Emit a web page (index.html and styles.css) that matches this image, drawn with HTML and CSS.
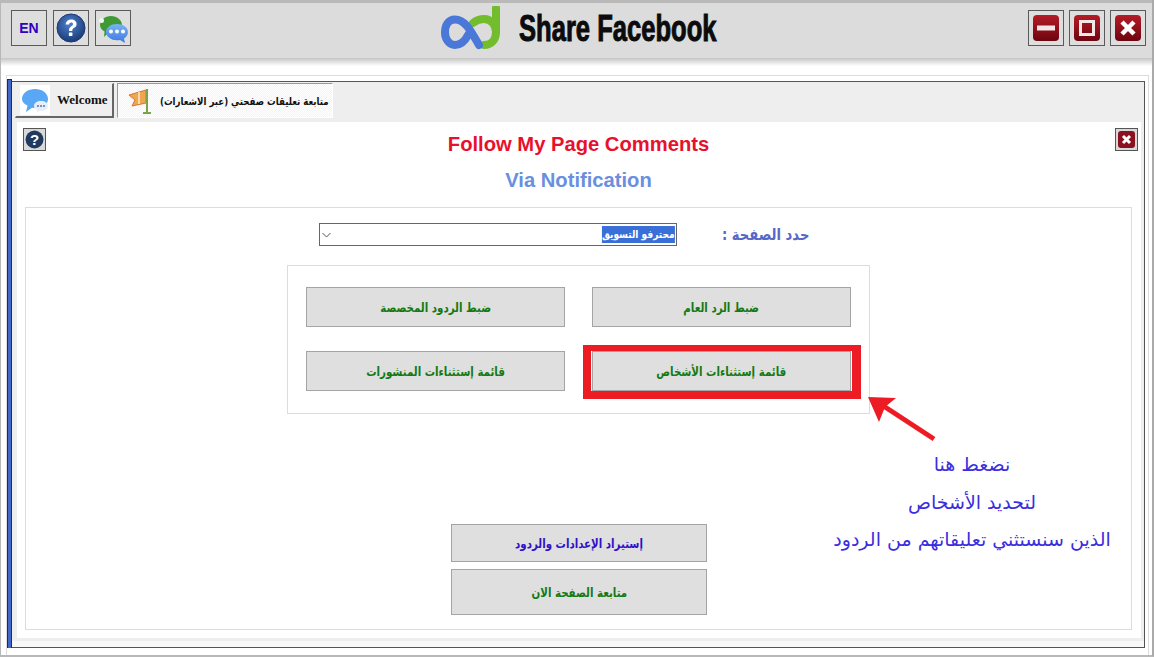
FILE: index.html
```html
<!DOCTYPE html>
<html lang="ar">
<head>
<meta charset="utf-8">
<title>Share Facebook</title>
<link rel="stylesheet" href="styles.css">
</head>
<body>
<div class="window">
  <header class="topbar">
    <div class="tool-group">
      <button class="tool lang">EN</button>
      <button class="tool"><svg width="30" height="30" viewBox="0 0 30 30"><defs><radialGradient id="gb" cx="45%" cy="35%" r="70%"><stop offset="0" stop-color="#4f80cc"/><stop offset="1" stop-color="#163672"/></radialGradient></defs><circle cx="15" cy="15" r="14" fill="url(#gb)" stroke="#1d3670"/><path d="M9.600 11.600c.3-3.400 2.700-5.200 5.700-5.200 3.100 0 5.300 1.800 5.300 4.500 0 2-1.100 3.100-2.700 4.200-1.300.9-1.600 1.400-1.600 2.900h-3.300c-.1-2.400.5-3.500 2.200-4.700 1.200-.9 1.800-1.400 1.800-2.300 0-1-.7-1.600-1.800-1.600-1.200 0-2 .8-2.200 2.200z" fill="#fff"/><rect x="12.900" y="19.600" width="3.500" height="3.500" rx=".6" fill="#fff"/></svg></button>
      <button class="tool"><svg width="32" height="32" viewBox="0 0 32 32"><defs><linearGradient id="cb" x1="0" y1="0" x2="0" y2="1"><stop offset="0" stop-color="#78b4f5"/><stop offset="1" stop-color="#3c78e0"/></linearGradient></defs><path d="M3 13C3 8 8 4 14 4s11 4 11 9-5 9-11 9c-1.200 0-2.300-.1-3.300-.4L7 25l.5-5.500C4.800 18 3 15.700 3 13z" fill="#3f9a36"/><circle cx="4.500" cy="8.500" r="2.500" fill="#eef6ea"/><path d="M9 20c0-4.500 5-8 11-8s11 3.500 11 8c0 2.800-1.500 5-4 6.500l1 4.500-5-3c-1 .2-2 .3-3 .3-6 0-11-3.800-11-8.300z" fill="url(#cb)"/><circle cx="14" cy="19.500" r="2" fill="#fff"/><circle cx="20" cy="19.500" r="2" fill="#fff"/><circle cx="26" cy="19.500" r="2" fill="#fff"/></svg></button>
    </div>
    <div class="brand">
      <svg class="brand-mark" width="68" height="46" viewBox="440 6 68 46"><path d="M473 23C476 20.500 480 19 484 19 491 19 496 25 496 32 496 40 491 45 484 45M496 33V8" fill="none" stroke="#73bc2e" stroke-width="8" stroke-linecap="round"/><path d="M479 45C475 38 471 31 467 26 463 21.500 459 19.500 455 19.500 448 19.500 445 26 445 32.500 445 39 449 45 455 45 461 45 465 41 468 35" fill="none" stroke="#4a78d8" stroke-width="8" stroke-linecap="round"/></svg>
      <span class="brand-name">Share Facebook</span>
    </div>
    <div class="tool-group tool-group-wide">
      <button class="tool"><span class="win-ctl"><svg width="26" height="26" viewBox="0 0 26 26"><rect x="4" y="10.500" width="18" height="5" fill="#f3e6e6"/></svg></span></button>
      <button class="tool"><span class="win-ctl"><svg width="26" height="26" viewBox="0 0 26 26"><rect x="6.500" y="6.500" width="13" height="13" fill="none" stroke="#f3e6e6" stroke-width="3"/></svg></span></button>
      <button class="tool"><span class="win-ctl"><svg width="26" height="26" viewBox="0 0 26 26"><path d="M7 7l12 12M19 7L7 19" stroke="#fff" stroke-width="4.500"/></svg></span></button>
    </div>
  </header>
  <div class="topbar-shade"></div>

  <div class="frame">
    <div class="strip"></div>
    <main class="panel">
      <nav class="tabs">
        <div class="tab tab-welcome">
          <svg class="tab-icon" width="30" height="30" viewBox="0 0 30 30"><rect width="30" height="30" fill="#fff"/><path d="M2 14C2 8 8 4 15 4s13 4 13 10-6 9-13 9c-1 0-2 0-3-.2L6 27l1.500-6.500C4 19 2 17 2 14z" fill="#5aa8f5"/><path d="M14 21c0-3 3-5 7-5s7 2 7 5-3 5-7 5h-2l-2 2v-3c-2-.8-3-2-3-4z" fill="#e8eef7"/><circle cx="18" cy="21" r="1.100" fill="#5f7fb4"/><circle cx="21" cy="21" r="1.100" fill="#5f7fb4"/><circle cx="24" cy="21" r="1.100" fill="#5f7fb4"/></svg>
          <span class="tab-latin">Welcome</span>
        </div>
        <div class="tab tab-active">
          <svg class="tab-icon-flag" width="24" height="26" viewBox="0 0 24 26"><path d="M2 7l17-5v13L5 18l3-6z" fill="#f0a552" stroke="#d9752b"/><path d="M12 4v12" stroke="#f8d9a8" stroke-width="2"/><rect x="19" y="1" width="2" height="23" fill="#79a24a"/><path d="M16 25h8" stroke="#79a24a" stroke-width="2"/></svg>
          <span class="tab-ar" dir="rtl">متابعة تعليقات صفحتي (عبر الاشعارات)</span>
        </div>
      </nav>

      <section class="content">
        <div class="head">
          <button class="mini-btn"><svg width="21" height="21" viewBox="0 0 21 21"><circle cx="10.500" cy="10.500" r="9" fill="#1f3a5f"/><text x="10.500" y="15.500" class="mini-q">?</text></svg></button>
          <div class="titles">
            <h1 class="title-red">Follow My Page Comments</h1>
            <h2 class="title-blue">Via Notification</h2>
          </div>
          <button class="mini-btn"><svg width="19" height="19" viewBox="0 0 19 19"><rect x="1" y="1" width="17" height="17" rx="3" fill="#8c1120"/><path d="M6 6l7 7M13 6l-7 7" stroke="#fff" stroke-width="3"/></svg></button>
        </div>

        <div class="box">
          <div class="select-row">
            <div class="select" dir="rtl">
              <span class="select-value">محترفو التسويق</span>
              <svg class="select-arrow" width="9" height="6" viewBox="0 0 9 6"><path d="M.5 1l4 4 4-4" fill="none" stroke="#555"/></svg>
            </div>
            <label class="select-label" dir="rtl">حدد الصفحة :</label>
          </div>

          <div class="btn-group" dir="rtl">
            <button class="act"><span class="act-label">ضبط الرد العام</span></button>
            <button class="act"><span class="act-label">ضبط الردود المخصصة</span></button>
            <button class="act"><span class="act-label">قائمة إستثناءات الأشخاص</span></button>
            <button class="act"><span class="act-label">قائمة إستثناءات المنشورات</span></button>
          </div>

          <div class="bottom-btns" dir="rtl">
            <button class="act act-blue"><span class="act-label">إستيراد الإعدادات والردود</span></button>
            <button class="act act-tall"><span class="act-label">متابعة الصفحة الان</span></button>
          </div>
        </div>
      </section>
    </main>
  </div>

  <div class="callout-frame"></div>
  <svg class="callout-arrow" width="80" height="60" viewBox="0 0 80 60"><path d="M71 46L19 12" stroke="#ed1c24" stroke-width="5"/><path d="M5 4L33 5 22 14 16 29z" fill="#ed1c24"/></svg>
  <div class="callout-text" dir="rtl">
    <p>نضغط هنا</p>
    <p>لتحديد الأشخاص</p>
    <p>الذين سنستثني تعليقاتهم من الردود</p>
  </div>
</div>
</body>
</html>
```

FILE: styles.css
```css
* { box-sizing: border-box; }
html, body { margin: 0; padding: 0; height: 657px; overflow: hidden; background: #fff; }
body { font-family: "Liberation Sans", "DejaVu Sans", sans-serif; }
button { font: inherit; padding: 0; margin: 0; cursor: pointer; }

.window {
  position: relative;
  width: 1154px;
  height: 657px;
  display: flex;
  flex-direction: column;
  border-left: 1px solid #b8b8b8;
  border-right: 2px solid #aaa;
  border-bottom: 2px solid #b8b8b8;
}

.topbar {
  position: relative;
  height: 58px;
  flex: none;
  background: #dcdcdc;
  border-top: 3px solid #b9b9b9;
  padding: 7px 6px 0 10px;
  display: flex;
  justify-content: space-between;
  align-items: flex-start;
}
.topbar-shade { height: 8px; flex: none; background: linear-gradient(#c4c4c4, #fff); }

.tool-group { display: flex; gap: 6px; }
.tool-group-wide { gap: 5px; }
.tool {
  width: 36px;
  height: 36px;
  background: #dedede;
  border: 1px solid #5a5a5a;
  display: flex;
  align-items: center;
  justify-content: center;
}
.lang { color: #3300c0; font-weight: bold; font-size: 14px; }
.win-ctl {
  width: 26px;
  height: 26px;
  border-radius: 4px;
  background: linear-gradient(#b51c26, #6d0510);
  display: block;
}
.win-ctl svg { display: block; }

.brand {
  position: absolute;
  left: 439px;
  top: 0;
  display: flex;
  align-items: center;
  height: 52px;
}
.brand-mark { display: block; margin-right: 11px; }
.brand-name {
  font-family: "Liberation Sans", sans-serif;
  font-weight: bold;
  font-size: 36px;
  color: #0c0c0c;
  -webkit-text-stroke: 1px #0c0c0c;
  transform: scaleX(.71);
  transform-origin: left center;
  white-space: nowrap;
}

.frame {
  flex: 1;
  margin: 9px 3px 0 5px;
  border: 1px solid #dcdcdc;
  border-bottom: 0;
  padding: 3px 3px 7px 0;
  display: flex;
  min-height: 0;
}
.strip {
  width: 5px;
  flex: none;
  background: #3f68c8;
  border: 1px solid #2a2a4a;
  border-bottom: 0;
}
.panel {
  flex: 1;
  margin-top: 2px;
  background: linear-gradient(#eeeeee calc(100% - 6px), #f8f8f8 0);
  border: 1px solid #555;
  border-left: 0;
  display: flex;
  flex-direction: column;
  min-width: 0;
}

.tabs { display: flex; gap: 3px; height: 40px; flex: none; padding: 1px 0 0 3px; align-items: flex-start; }
.tab { display: flex; align-items: center; height: 35px; background: #efefef; }
.tab-welcome {
  width: 99px;
  border: 1px solid #eee;
  border-right: 2px solid #666;
  border-bottom: 2px solid #666;
  padding-left: 4px;
}
.tab-icon { display: block; }
.tab-latin { font-family: "Liberation Serif", serif; font-weight: bold; font-size: 13px; margin-left: 7px; color: #111; }
.tab-active {
  width: 216px;
  border: 1px solid #999;
  border-right-color: #fff;
  border-bottom-color: #fff;
  background: repeating-conic-gradient(#f4f4f4 0 25%, #fff 0 50%) 0 0 / 2px 2px;
  padding-left: 9px;
}
.tab-icon-flag { display: block; flex: none; }
.tab-ar {
  font-family: "DejaVu Sans", sans-serif;
  font-size: 10.500px;
  font-weight: bold;
  color: #111;
  margin-left: 9px;
  white-space: nowrap;
  transform: scaleX(.82);
  transform-origin: left center;
}

.content {
  flex: 1;
  background: #fff;
  margin: 0 3px 9px 5px;
  display: flex;
  flex-direction: column;
  min-height: 0;
}
.head {
  display: grid;
  grid-template-columns: 23px 1fr 23px;
  padding: 4px 3px 9px 6px;
  height: 85px;
  flex: none;
}
.mini-btn {
  width: 23px;
  height: 23px;
  margin-top: 2px;
  background: #d9d9d9;
  border: 1px solid #555;
  display: flex;
  align-items: center;
  justify-content: center;
}
.mini-q { font-family: "Liberation Sans", sans-serif; font-weight: bold; font-size: 15px; fill: #fff; text-anchor: middle; }
.titles { text-align: center; padding-right: 4px; }
.title-red, .title-blue { margin: 0; font-size: 20.200px; font-weight: bold; line-height: 36px; }
.title-red { color: #e8112d; }
.title-blue { color: #6a8fdf; }

.box {
  flex: 1;
  margin: 0 9px 8px 8px;
  border: 1px solid #dcdcdc;
  padding-top: 15px;
  min-height: 0;
}
.select-row { display: flex; align-items: center; padding-left: 293px; gap: 45px; }
.select {
  position: relative;
  width: 358px;
  height: 23px;
  border: 1px solid #666;
  background: #fff;
  padding: 0 1px 0 0;
  display: flex;
  align-items: center;
}
.select-value {
  background: #3a6fd8;
  color: #fff;
  font-family: "DejaVu Sans", sans-serif;
  font-size: 11px;
  font-weight: bold;
  line-height: 17px;
  white-space: nowrap;
  transform: scaleX(.82);
  transform-origin: right center;
}
.select-arrow { position: absolute; left: 2px; top: 8px; }
.select-label {
  font-family: "DejaVu Sans", sans-serif;
  font-weight: bold;
  font-size: 16px;
  color: #5668c8;
  white-space: nowrap;
  transform: scaleX(.82);
  transform-origin: left center;
}

.btn-group {
  width: 583px;
  height: 149px;
  margin: 19px 0 0 261px;
  border: 1px solid #dcdcdc;
  padding: 21px 18px 0;
  display: grid;
  grid-template-columns: 259px 259px;
  grid-auto-rows: 40px;
  column-gap: 27px;
  row-gap: 24px;
}
.act {
  background: #dfdfdf;
  border: 1px solid #a4a4a4;
  color: #127a12;
  font-family: "DejaVu Sans", sans-serif;
  font-size: 12.500px;
  font-weight: bold;
  white-space: nowrap;
}
.act-label { display: inline-block; transform: scaleX(.82); }
.act-blue { color: #3010c8; }
.act-tall { height: 46px; }

.bottom-btns {
  width: 256px;
  margin: 110px 0 0 425px;
  display: flex;
  flex-direction: column;
  gap: 7px;
}
.bottom-btns .act-blue { height: 38px; }

.callout-frame {
  position: absolute;
  left: 582px;
  top: 345px;
  width: 278px;
  height: 54px;
  border: solid #ed1c24;
  border-width: 6px 9px 8px 8px;
}
.callout-arrow { position: absolute; left: 862px; top: 393px; }
.callout-text {
  position: absolute;
  left: 811px;
  top: 446px;
  width: 320px;
  text-align: center;
  color: #3a2ee0;
  font-family: "DejaVu Sans", sans-serif;
  font-size: 19px;
  line-height: 37.500px;
}
.callout-text p { margin: 0; white-space: nowrap; }
```
